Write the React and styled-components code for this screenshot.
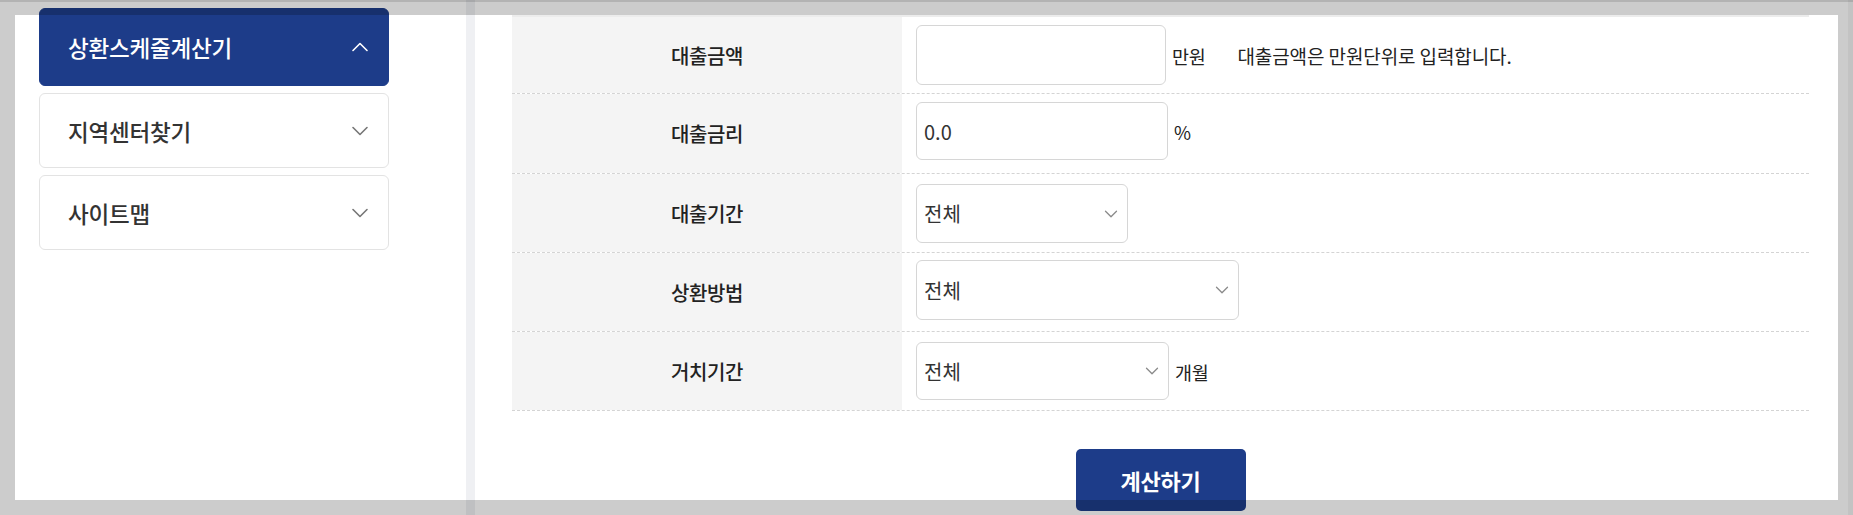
import React from 'react';
import styled, { createGlobalStyle } from 'styled-components';
import { ChevronDown, ChevronUp } from 'lucide-react';

const GlobalStyle = createGlobalStyle`
  html, body { margin: 0; padding: 0; background: #fff; }
  body { font-family: "Noto Sans CJK KR", "Noto Sans", sans-serif; color: #222; }
  *, *::before, *::after { box-sizing: border-box; }
`;

const NAVY = '#1d3c89';

const Page = styled.div`
  position: relative;
  display: flex;
  width: 1853px;
  height: 515px;
  overflow: hidden;
  background: #fff;
`;

const Sidebar = styled.aside`
  flex: none;
  width: 466px;
  padding: 8px 0 0 39px;
  display: flex;
  flex-direction: column;
  gap: 7px;
`;

const NavItem = styled.div`
  width: 350px;
  height: ${(p) => (p.$active ? 78 : 75)}px;
  display: flex;
  align-items: center;
  justify-content: space-between;
  padding: 0 14px 0 28px;
  border-radius: 6px;
  background: ${(p) => (p.$active ? NAVY : '#fff')};
  border: 1px solid ${(p) => (p.$active ? NAVY : '#e3e3e3')};
  color: ${(p) => (p.$active ? '#fff' : '#333')};
  font-size: 22.5px;
  font-weight: 500;
  letter-spacing: -0.2px;
  svg { color: ${(p) => (p.$active ? '#fff' : '#777')}; flex: none; }
`;

const Divider = styled.div`
  flex: none;
  width: 9px;
  background: #eff0f3;
`;

const Main = styled.main`
  flex: 1;
  display: flex;
  flex-direction: column;
  padding: 15px 44px 0 37px;
`;

const Table = styled.div`
  border-top: 2px solid #ececec;
`;

const Row = styled.div`
  display: grid;
  grid-template-columns: 390px 1fr;
  height: ${(p) => p.$h}px;
  border-bottom: 1px dashed #d4d4d4;
`;

const Label = styled.div`
  display: flex;
  align-items: center;
  justify-content: center;
  background: #f4f4f4;
  font-size: 20px;
  font-weight: 500;
  color: #222;
  letter-spacing: -0.4px;
`;

const Cell = styled.div`
  display: flex;
  align-items: flex-start;
  padding: ${(p) => p.$top}px 0 0 14px;
`;

const Field = styled.div`
  display: flex;
  align-items: baseline;
`;

const TextInput = styled.input`
  width: ${(p) => p.$w}px;
  height: ${(p) => p.$h}px;
  border: 1px solid #d6d6d6;
  border-radius: 6px;
  padding: 0 7px;
  font-family: inherit;
  font-size: 20px;
  color: #333;
  background: #fff;
  outline: none;
`;

const SelectWrap = styled.div`
  position: relative;
  display: flex;
  width: ${(p) => p.$w}px;
`;

const Select = styled.select`
  appearance: none;
  -webkit-appearance: none;
  width: 100%;
  height: ${(p) => p.$h}px;
  border: 1px solid #d6d6d6;
  border-radius: 6px;
  padding: 0 7px;
  font-family: inherit;
  font-size: 20px;
  color: #333;
  background: #fff;
  outline: none;
`;

const SelectIcon = styled.span`
  position: absolute;
  right: 6px;
  top: 50%;
  transform: translateY(-50%);
  display: flex;
  color: #8a8a8a;
  pointer-events: none;
`;

const Unit = styled.span`
  margin-left: 6px;
  font-size: 18.5px;
  color: #222;
  letter-spacing: -0.3px;
`;

const Help = styled.span`
  margin-left: 32px;
  font-size: 19px;
  color: #222;
  letter-spacing: -0.1px;
`;

const Submit = styled.button`
  align-self: center;
  margin-top: 38px;
  width: 170px;
  height: 62px;
  flex: none;
  border: none;
  border-radius: 5px;
  background: ${NAVY};
  color: #fff;
  font-family: inherit;
  font-size: 22px;
  font-weight: 700;
  letter-spacing: -0.3px;
`;

const Shade = styled.div`
  position: absolute;
  background: rgba(0, 0, 0, 0.2);
  pointer-events: none;
  ${(p) => p.$side === 'top' && 'left:0; right:0; top:0; height:15px; border-top: 2px solid rgba(0,0,0,0.12);'}
  ${(p) => p.$side === 'bottom' && 'left:0; right:0; top:500px; bottom:0;'}
  ${(p) => p.$side === 'left' && 'left:0; width:15px; top:15px; bottom:15px;'}
  ${(p) => p.$side === 'right' && 'left:1838px; right:0; top:15px; bottom:15px;'}
`;

const ScrollEdge = styled.div`
  position: absolute;
  top: 0;
  bottom: 0;
  right: 0;
  width: 5px;
  background: rgba(0, 0, 0, 0.045);
  pointer-events: none;
`;

const navItems = [
  { label: '상환스케줄계산기', active: true },
  { label: '지역센터찾기' },
  { label: '사이트맵' },
];

function Dropdown({ w, h }) {
  return (
    <SelectWrap $w={w}>
      <Select $h={h} defaultValue="all">
        <option value="all">전체</option>
      </Select>
      <SelectIcon>
        <ChevronDown size={22} strokeWidth={1.4} />
      </SelectIcon>
    </SelectWrap>
  );
}

export default function App() {
  return (
    <Page>
      <GlobalStyle />
      <Sidebar>
        {navItems.map((it) => (
          <NavItem key={it.label} $active={it.active}>
            <span>{it.label}</span>
            {it.active ? (
              <ChevronUp size={28} strokeWidth={1.4} />
            ) : (
              <ChevronDown size={28} strokeWidth={1.4} />
            )}
          </NavItem>
        ))}
      </Sidebar>
      <Divider />
      <Main>
        <Table>
          <Row $h={77}>
            <Label>대출금액</Label>
            <Cell $top={8}>
              <Field>
                <TextInput $w={250} $h={60} />
                <Unit>만원</Unit>
                <Help>대출금액은 만원단위로 입력합니다.</Help>
              </Field>
            </Cell>
          </Row>
          <Row $h={80}>
            <Label>대출금리</Label>
            <Cell $top={8}>
              <Field>
                <TextInput $w={252} $h={58} defaultValue="0.0" />
                <Unit>%</Unit>
              </Field>
            </Cell>
          </Row>
          <Row $h={79}>
            <Label>대출기간</Label>
            <Cell $top={10}>
              <Field>
                <Dropdown w={212} h={59} />
              </Field>
            </Cell>
          </Row>
          <Row $h={79}>
            <Label>상환방법</Label>
            <Cell $top={7}>
              <Field>
                <Dropdown w={323} h={60} />
              </Field>
            </Cell>
          </Row>
          <Row $h={79}>
            <Label>거치기간</Label>
            <Cell $top={10}>
              <Field>
                <Dropdown w={253} h={58} />
                <Unit>개월</Unit>
              </Field>
            </Cell>
          </Row>
        </Table>
        <Submit type="button">계산하기</Submit>
      </Main>
      <Shade $side="top" />
      <Shade $side="left" />
      <Shade $side="right" />
      <Shade $side="bottom" />
      <ScrollEdge />
    </Page>
  );
}
